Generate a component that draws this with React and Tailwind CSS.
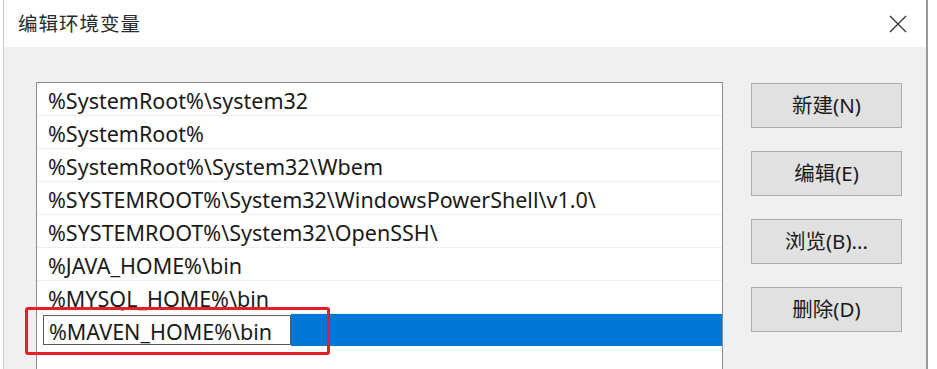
import React from "react";

const rows = [
  "%SystemRoot%\\system32",
  "%SystemRoot%",
  "%SystemRoot%\\System32\\Wbem",
  "%SYSTEMROOT%\\System32\\WindowsPowerShell\\v1.0\\",
  "%SYSTEMROOT%\\System32\\OpenSSH\\",
  "%JAVA_HOME%\\bin",
  "%MYSQL_HOME%\\bin",
];

const buttons = ["新建(N)", "编辑(E)", "浏览(B)...", "删除(D)"];

const font = { fontFamily: '"Noto Sans", "Noto Sans CJK SC", sans-serif' };

export default function App() {
  return (
    <div className="w-[937px] h-[369px] overflow-hidden bg-white relative" style={font}>
      <div className="ml-[3px] w-[925px] h-full border-l border-[#c8c8c8] border-r-2 border-r-[#9a9a9a] flex flex-col">
        <div className="h-[47px] bg-white flex items-center justify-between pl-[14px] pr-[19px] shrink-0">
          <span className="text-[19.5px] text-[#2a2a2a] leading-none tracking-[1px]">编辑环境变量</span>
          <svg width="18" height="18" viewBox="0 0 18 18" className="text-[#333]">
            <path d="M1 1 L17 17 M17 1 L1 17" stroke="currentColor" strokeWidth="1.3" />
          </svg>
        </div>
        <div className="flex-1 bg-[#f0f0f0] flex pl-[32px] pt-[35px]">
          <div className="w-[687px] border border-[#8c8c8c] bg-white flex flex-col shrink-0 h-[300px]">
            {rows.map((r) => (
              <div
                key={r}
                className="h-[33px] border-b border-[#efefef] flex items-center pl-[11px] text-[21.5px] text-[#1a1a1a] leading-none pt-[4px] shrink-0"
              >
                {r}
              </div>
            ))}
            <div className="h-[33px] flex items-stretch shrink-0 pt-[1px] pb-[2px]">
              <div className="w-[6px] bg-white" />
              <div className="w-[248px] bg-white border border-[#5a5a5a] flex items-center pl-[5px] text-[21.5px] text-[#1a1a1a] leading-none pt-[3px]">
                %MAVEN_HOME%\bin
              </div>
              <div className="flex-1 bg-[#0078d7] -my-[1px]" />
            </div>
          </div>
          <div className="ml-[28px] flex flex-col gap-[23px] pt-[1px]">
            {buttons.map((b) => (
              <div
                key={b}
                className="w-[151px] h-[45px] bg-[#e1e1e1] border border-[#adadad] flex items-center justify-center text-[20.5px] text-[#1a1a1a] leading-none"
              >
                {b}
              </div>
            ))}
          </div>
        </div>
      </div>
      <div className="absolute left-[25px] top-[307px] w-[305px] h-[48px] border-[3px] border-[#e61e28] rounded-[3px]" />
    </div>
  );
}
